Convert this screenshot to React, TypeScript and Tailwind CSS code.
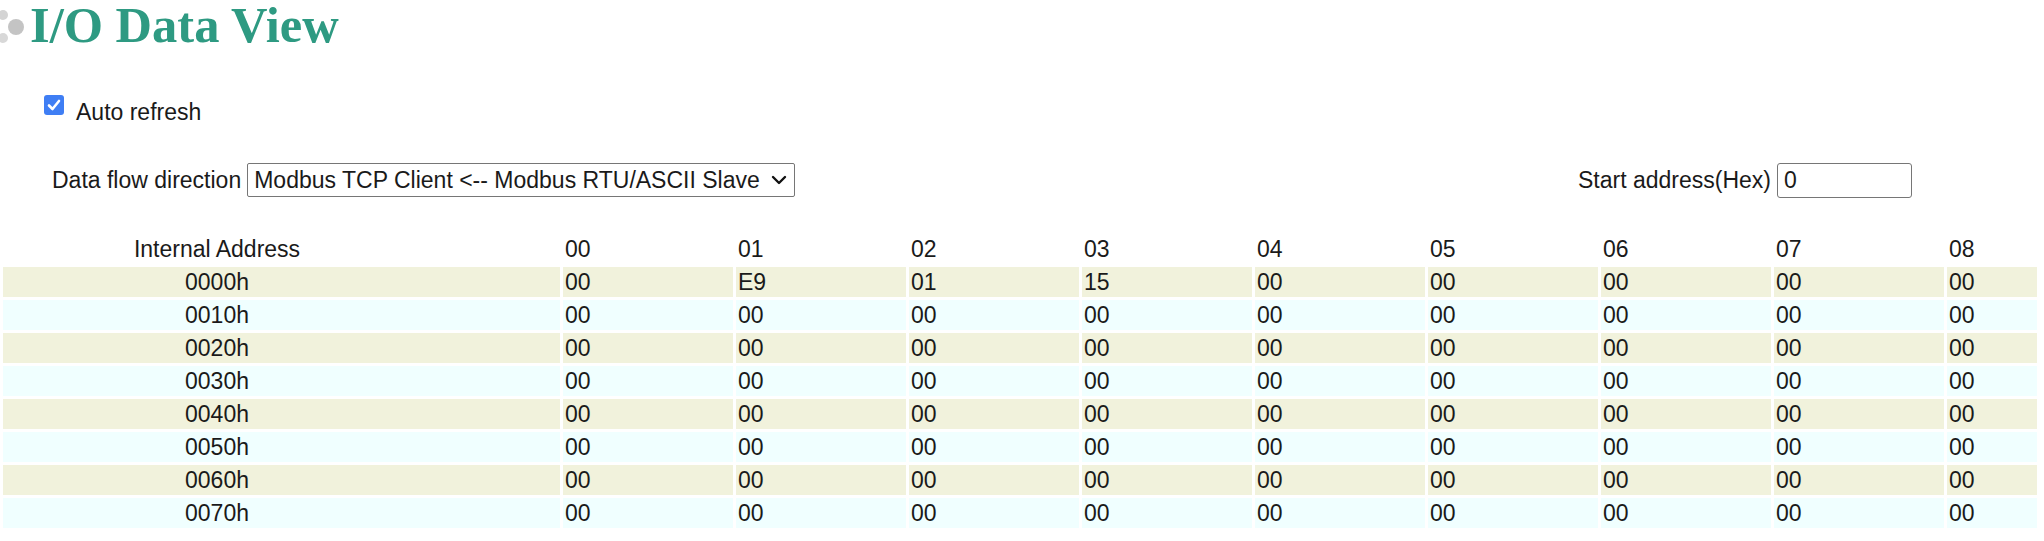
import React from "react";

const rows = [
  { addr: "0000h", vals: ["00", "E9", "01", "15", "00", "00", "00", "00", "00"] },
  { addr: "0010h", vals: ["00", "00", "00", "00", "00", "00", "00", "00", "00"] },
  { addr: "0020h", vals: ["00", "00", "00", "00", "00", "00", "00", "00", "00"] },
  { addr: "0030h", vals: ["00", "00", "00", "00", "00", "00", "00", "00", "00"] },
  { addr: "0040h", vals: ["00", "00", "00", "00", "00", "00", "00", "00", "00"] },
  { addr: "0050h", vals: ["00", "00", "00", "00", "00", "00", "00", "00", "00"] },
  { addr: "0060h", vals: ["00", "00", "00", "00", "00", "00", "00", "00", "00"] },
  { addr: "0070h", vals: ["00", "00", "00", "00", "00", "00", "00", "00", "00"] },
];

const cols = ["00", "01", "02", "03", "04", "05", "06", "07", "08"];

function Dots() {
  return (
    <svg width="28" height="46" viewBox="0 0 28 46" className="shrink-0">
      <circle cx="3" cy="15" r="5" fill="#d4d4d4" />
      <circle cx="16" cy="27" r="8" fill="#c4c4c4" />
      <circle cx="3" cy="38" r="5" fill="#d8d8d8" />
    </svg>
  );
}

export default function App() {
  return (
    <div className="w-[2044px] h-[541px] overflow-hidden bg-white font-['Liberation_Sans',Arial,sans-serif] text-[23px] leading-[26px] text-[#1a1a1a]">
      <h1 className="flex items-start h-[50px]">
        <Dots />
        <span className="ml-[2px] font-['Liberation_Serif','Times_New_Roman',serif] font-bold text-[50.5px] leading-none text-[#2e9a82]">
          I/O Data View
        </span>
      </h1>

      <label className="mt-[45px] ml-[44px] flex items-start h-[28px]">
        <span className="w-[20px] h-[20px] rounded-[3px] bg-[#3f7ef4] flex items-center justify-center">
          <svg width="14" height="12" viewBox="0 0 14 12">
            <path d="M2 6.5 L5.5 10 L12 2" stroke="white" strokeWidth="2.6" fill="none" strokeLinecap="round" strokeLinejoin="round" />
          </svg>
        </span>
        <span className="ml-[12px] mt-[4px]">Auto refresh</span>
      </label>

      <div className="mt-[40px] flex items-center justify-between pl-[52px] pr-[132px] h-[34px]">
        <div className="flex items-center">
          <span>Data flow direction</span>
          <div className="relative ml-[6px]">
            <select className="appearance-none w-[548px] h-[34px] border border-[#767676] rounded-[2px] bg-white pl-[6px] text-[23px] text-[#1a1a1a] font-['Liberation_Sans',Arial,sans-serif] outline-none">
              <option>Modbus TCP Client &lt;-- Modbus RTU/ASCII Slave</option>
            </select>
            <svg
              width="16"
              height="10"
              viewBox="0 0 16 10"
              className="absolute right-[8px] top-[12px] pointer-events-none"
            >
              <path d="M2 2 L8 8 L14 2" stroke="#111" strokeWidth="2.4" fill="none" strokeLinecap="round" strokeLinejoin="round" />
            </svg>
          </div>
        </div>
        <div className="flex items-center">
          <span>Start address(Hex)</span>
          <input
            defaultValue="0"
            className="ml-[6px] w-[135px] h-[35px] border border-[#767676] rounded-[3px] pl-[6px] text-[23px] text-[#1a1a1a] font-['Liberation_Sans',Arial,sans-serif] outline-none"
          />
        </div>
      </div>

      <table className="mt-[34px] table-fixed border-separate border-spacing-[3px] w-[2040px]">
        <colgroup>
          <col className="w-[557px]" />
          {cols.slice(0, 8).map((c) => (
            <col key={c} className="w-[170px]" />
          ))}
          <col className="w-[90px]" />
        </colgroup>
        <thead>
          <tr className="h-[30px]">
            <th className="p-0 font-normal text-left align-middle">
              <div className="w-[428px] text-center">Internal Address</div>
            </th>
            {cols.map((c) => (
              <th key={c} className="p-0 pl-[2px] font-normal text-left align-middle">
                {c}
              </th>
            ))}
          </tr>
        </thead>
        <tbody>
          {rows.map((r, i) => (
            <tr key={r.addr} className={`h-[30px] ${i % 2 === 0 ? "bg-[#f1f2dc]" : "bg-[#f0ffff]"}`}>
              <td className="p-0 align-middle">
                <div className="w-[428px] text-center">{r.addr}</div>
              </td>
              {r.vals.map((v, j) => (
                <td key={j} className="p-0 pl-[2px] align-middle">
                  {v}
                </td>
              ))}
            </tr>
          ))}
        </tbody>
      </table>
    </div>
  );
}
